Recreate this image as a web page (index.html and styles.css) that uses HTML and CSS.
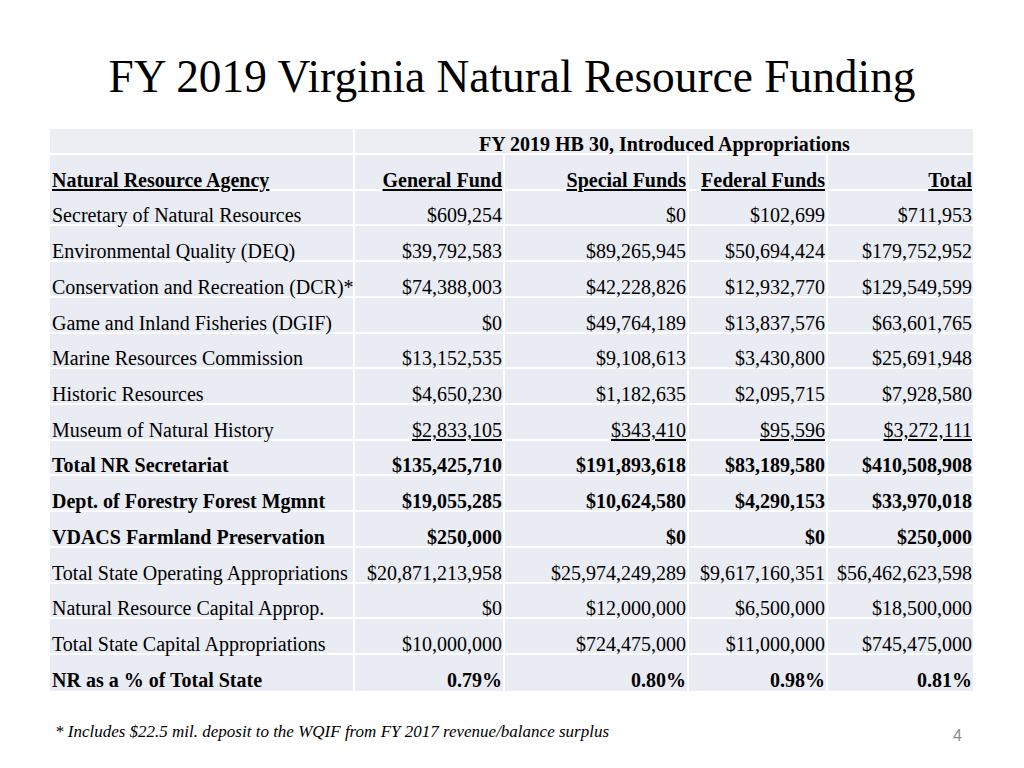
FILE: index.html
```html
<!DOCTYPE html>
<html lang="en">
<head>
<meta charset="utf-8">
<title>FY 2019 Virginia Natural Resource Funding</title>
<link rel="stylesheet" href="styles.css">
</head>
<body>
<div class="slide">
  <h1 class="title">FY 2019 Virginia Natural Resource Funding</h1>
  <table class="funding">
    <colgroup>
      <col class="c-agency">
      <col class="c-gen">
      <col class="c-spec">
      <col class="c-fed">
      <col class="c-tot">
    </colgroup>
    <thead>
      <tr class="group-row">
        <th class="blank"></th>
        <th class="group" colspan="4">FY 2019 HB 30, Introduced Appropriations</th>
      </tr>
      <tr class="head-row">
        <th class="name"><u>Natural Resource Agency</u></th>
        <th class="num"><u>General Fund</u></th>
        <th class="num"><u>Special Funds</u></th>
        <th class="num"><u>Federal Funds</u></th>
        <th class="num"><u>Total</u></th>
      </tr>
    </thead>
    <tbody>
      <tr><td class="name">Secretary of Natural Resources</td><td class="num">$609,254</td><td class="num">$0</td><td class="num">$102,699</td><td class="num">$711,953</td></tr>
      <tr><td class="name">Environmental Quality (DEQ)</td><td class="num">$39,792,583</td><td class="num">$89,265,945</td><td class="num">$50,694,424</td><td class="num">$179,752,952</td></tr>
      <tr><td class="name">Conservation and Recreation (DCR)*</td><td class="num">$74,388,003</td><td class="num">$42,228,826</td><td class="num">$12,932,770</td><td class="num">$129,549,599</td></tr>
      <tr><td class="name">Game and Inland Fisheries (DGIF)</td><td class="num">$0</td><td class="num">$49,764,189</td><td class="num">$13,837,576</td><td class="num">$63,601,765</td></tr>
      <tr><td class="name">Marine Resources Commission</td><td class="num">$13,152,535</td><td class="num">$9,108,613</td><td class="num">$3,430,800</td><td class="num">$25,691,948</td></tr>
      <tr><td class="name">Historic Resources</td><td class="num">$4,650,230</td><td class="num">$1,182,635</td><td class="num">$2,095,715</td><td class="num">$7,928,580</td></tr>
      <tr class="subtotal"><td class="name">Museum of Natural History</td><td class="num"><u>$2,833,105</u></td><td class="num"><u>$343,410</u></td><td class="num"><u>$95,596</u></td><td class="num"><u>$3,272,111</u></td></tr>
      <tr class="bold"><td class="name">Total NR Secretariat</td><td class="num">$135,425,710</td><td class="num">$191,893,618</td><td class="num">$83,189,580</td><td class="num">$410,508,908</td></tr>
      <tr class="bold"><td class="name">Dept. of Forestry Forest Mgmnt</td><td class="num">$19,055,285</td><td class="num">$10,624,580</td><td class="num">$4,290,153</td><td class="num">$33,970,018</td></tr>
      <tr class="bold"><td class="name">VDACS Farmland Preservation</td><td class="num">$250,000</td><td class="num">$0</td><td class="num">$0</td><td class="num">$250,000</td></tr>
      <tr><td class="name">Total State Operating Appropriations</td><td class="num">$20,871,213,958</td><td class="num">$25,974,249,289</td><td class="num">$9,617,160,351</td><td class="num">$56,462,623,598</td></tr>
      <tr><td class="name">Natural Resource Capital Approp.</td><td class="num">$0</td><td class="num">$12,000,000</td><td class="num">$6,500,000</td><td class="num">$18,500,000</td></tr>
      <tr><td class="name">Total State Capital Appropriations</td><td class="num">$10,000,000</td><td class="num">$724,475,000</td><td class="num">$11,000,000</td><td class="num">$745,475,000</td></tr>
      <tr class="bold"><td class="name">NR as a % of Total State</td><td class="num">0.79%</td><td class="num">0.80%</td><td class="num">0.98%</td><td class="num">0.81%</td></tr>
    </tbody>
  </table>
  <div class="footer">
    <p class="footnote">* Includes $22.5 mil. deposit to the WQIF from FY 2017 revenue/balance surplus</p>
    <span class="page-num">4</span>
  </div>
</div>
</body>
</html>
```

FILE: styles.css
```css
html, body {
  margin: 0;
  padding: 0;
  background: #ffffff;
}

.slide {
  width: 1024px;
  height: 768px;
  box-sizing: border-box;
  padding: 51px 0 0 50px;
  font-family: "Liberation Serif", "Times New Roman", serif;
  color: #000;
  overflow: hidden;
}

.title {
  margin: 0 0 26px -50px;
  width: 1024px;
  font-size: 45.4px;
  line-height: 52px;
  font-weight: normal;
  text-align: center;
}

.funding {
  border-collapse: separate;
  border-spacing: 0;
  table-layout: fixed;
  width: 923px;
  font-size: 20px;
}

.c-agency { width: 305px; }
.c-gen { width: 150px; }
.c-spec { width: 184px; }
.c-fed { width: 139px; }
.c-tot { width: 145px; }

.funding th,
.funding td {
  background: #e9ecf3;
  border-right: 2px solid #ffffff;
  border-bottom: 2px solid #ffffff;
  padding: 0 1px 0 2px;
  vertical-align: bottom;
  line-height: 18px;
  white-space: nowrap;
  overflow: visible;
}

.funding th:last-child,
.funding td:last-child {
  border-right: none;
}

.funding tbody tr:last-child td {
  border-bottom: none;
  padding-bottom: 2px;
}

.group-row {
  height: 26px;
}

.group-row th {
  background: #eceef4;
}

.group {
  font-weight: bold;
  text-align: center;
}

.head-row,
.funding tbody tr {
  height: 35.73px;
}

.head-row th {
  font-weight: bold;
}

.name {
  text-align: left;
}

.num {
  text-align: right;
}

.bold td {
  font-weight: bold;
}

u {
  text-decoration-thickness: 2px;
  text-underline-offset: 2px;
}

.footer {
  display: flex;
  justify-content: space-between;
  align-items: flex-end;
  width: 912px;
  margin-top: 31px;
}

.footnote {
  margin: 0 0 0 5px;
  font-style: italic;
  font-size: 17px;
  line-height: 20px;
}

.page-num {
  font-family: "Liberation Sans", Arial, sans-serif;
  font-size: 16px;
  line-height: 20px;
  color: #8c8c8c;
  margin-bottom: -4px;
}
```
